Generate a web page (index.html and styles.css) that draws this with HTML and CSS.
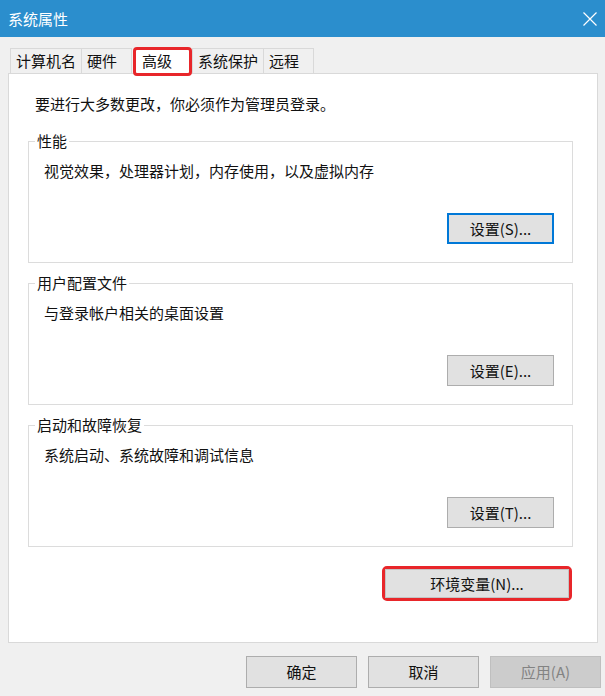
FILE: index.html
```html
<!DOCTYPE html>
<html lang="zh-CN">
<head>
<meta charset="utf-8">
<title>系统属性</title>
<link rel="stylesheet" href="styles.css">
</head>
<body>
<div class="window">
  <div class="titlebar">
    <span class="title">系统属性</span>
    <svg class="close" width="16" height="16" viewBox="0 0 16 16" aria-hidden="true">
      <path d="M1.5 1.5 L14.5 14.5 M14.5 1.5 L1.5 14.5" stroke="#fff" stroke-width="1.2" fill="none"/>
    </svg>
  </div>
  <div class="content">
    <div class="tabs">
      <div class="tab">计算机名</div>
      <div class="tab tab-short">硬件</div>
      <div class="tab tab-active">高级</div>
      <div class="tab">系统保护</div>
      <div class="tab tab-short">远程</div>
    </div>
    <div class="panel">
      <p class="note">要进行大多数更改，你必须作为管理员登录。</p>
      <fieldset class="group">
        <legend>性能</legend>
        <p class="desc">视觉效果，处理器计划，内存使用，以及虚拟内存</p>
        <div class="actions"><button class="btn btn-set btn-focus">设置(S)...</button></div>
      </fieldset>
      <fieldset class="group">
        <legend>用户配置文件</legend>
        <p class="desc">与登录帐户相关的桌面设置</p>
        <div class="actions"><button class="btn btn-set">设置(E)...</button></div>
      </fieldset>
      <fieldset class="group">
        <legend>启动和故障恢复</legend>
        <p class="desc">系统启动、系统故障和调试信息</p>
        <div class="actions"><button class="btn btn-set">设置(T)...</button></div>
      </fieldset>
      <div class="env-row">
        <span class="mark"><button class="btn btn-env">环境变量(N)...</button></span>
      </div>
    </div>
    <div class="footer">
      <button class="btn btn-foot">确定</button>
      <button class="btn btn-foot">取消</button>
      <button class="btn btn-foot" disabled>应用(A)</button>
    </div>
  </div>
</div>
</body>
</html>
```
FILE: styles.css
```css
* { box-sizing: border-box; }
html, body {
  margin: 0;
  padding: 0;
  background: #f0f0f0;
}
body {
  font-family: "Noto Sans CJK SC", "Microsoft YaHei", "Noto Sans", sans-serif;
  font-size: 15px;
  line-height: 20px;
  color: #111;
  width: 605px;
  height: 696px;
  overflow: hidden;
}
.titlebar {
  height: 37px;
  background: #2b8ecd;
  color: #fff;
  display: flex;
  align-items: center;
  justify-content: space-between;
  padding: 0 7px 0 8px;
}
.title { font-size: 15px; line-height: 20px; }
.close { display: block; }
.content {
  padding: 11px 4px 0 8px;
}
.tabs {
  display: flex;
  align-items: flex-start;
  height: 25px;
  padding-left: 2px;
}
.tab {
  height: 25px;
  line-height: 24px;
  padding: 0 5px;
  border: 1px solid #d9d9d9;
  border-bottom: none;
  background: #f0f0f0;
  margin-right: -1px;
  white-space: nowrap;
}
.tab-short { min-width: 51px; }
.tab-active {
  position: relative;
  z-index: 1;
  margin-top: -1px;
  margin-left: 2px;
  height: 29px;
  line-height: 22px;
  background: #fff;
  border: 3px solid #e8262a;
  border-radius: 4px;
  padding: 0 17px 0 6px;
  margin-right: 0;
}
.panel {
  width: 590px;
  height: 570px;
  background: #fff;
  border: 1px solid #d9d9d9;
  padding: 20px 24px 0 19px;
}
.note {
  margin: 0 0 17px 7px;
}
.group {
  margin: 0 0 10px 0;
  padding: 10px 18px 18px 0;
  border: 1px solid #dcdcdc;
  min-width: 0;
}
.group legend {
  margin-left: 6px;
  padding: 0 2px;
  line-height: 20px;
}
.desc {
  margin: 0 0 32px 15px;
}
.actions {
  display: flex;
  justify-content: flex-end;
}
.btn {
  font-family: inherit;
  font-size: 15px;
  line-height: 20px;
  color: #111;
  background: #e1e1e1;
  border: 1px solid #adadad;
  padding: 0;
  margin: 0;
}
.btn-set {
  width: 107px;
  height: 31px;
}
.btn-focus {
  border: 2px solid #0078d7;
}
.env-row {
  display: flex;
  justify-content: flex-end;
  margin-top: 19px;
  padding-right: 1px;
}
.mark {
  display: block;
  border: 3px solid #e8262a;
  border-radius: 5px;
}
.btn-env {
  display: block;
  width: 184px;
  height: 29px;
  border-color: #c4c4c4;
}
.footer {
  display: flex;
  justify-content: flex-end;
  gap: 11px;
  margin-top: 13px;
}
.btn-foot {
  width: 111px;
  height: 32px;
}
.btn-foot:disabled {
  background: #cccccc;
  border-color: #bfbfbf;
  color: #838383;
}
```
